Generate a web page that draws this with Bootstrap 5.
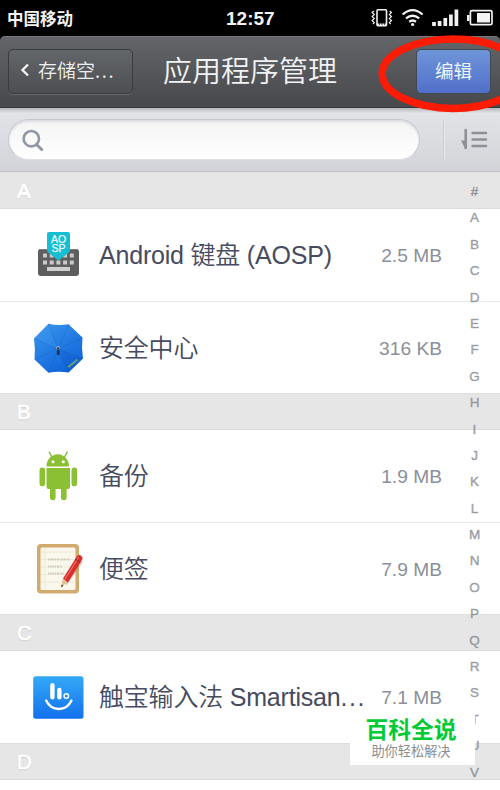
<!DOCTYPE html>
<html lang="zh-CN">
<head>
    <meta charset="UTF-8">
    <meta name="viewport" content="width=device-width, initial-scale=1.0">
    <title>应用程序管理</title>
    <link href="https://cdn.jsdelivr.net/npm/bootstrap@5.3.2/dist/css/bootstrap.min.css" rel="stylesheet">
    <style>
        body { font-family: "Liberation Sans", "Noto Sans CJK SC", sans-serif; height: 790px; overflow: hidden; background: #fff; }
        svg { display: block; flex: none; }

        .status-bar { height: 36px; background: #000; color: #f4f4f4; }
        .carrier { width: 226px; padding-left: 7px; font: 700 16.5px/36px "Noto Sans CJK SC", sans-serif; }
        .clock { font-size: 19px; font-weight: 700; line-height: 38px; }

        .top-wrap { background: #000; }
        .top-bar { height: 72px; background: linear-gradient(#636569, #47484b); border-top: 1px solid #77797c; border-bottom: 1px solid #37383a; border-radius: 5px 5px 0 0; color: #f2f3f4; padding: 0 9px 2px 8px; font-family: "Noto Sans CJK SC", sans-serif; }
        .btn-back { width: 125px; height: 45px; padding: 0 0 2px 11px; border: 1px solid #393b3d; border-radius: 5px; background: linear-gradient(#63666a, #4c4e51); color: #eeeff0; font-size: 19px; font-weight: 350; line-height: 40px; box-shadow: 0 1px 0 #66686b; text-align: left; }
        .page-title { font-size: 29px; font-weight: 350; line-height: 62px; padding-bottom: 4px; margin-left: 30px; width: 176px; white-space: nowrap; }
        .btn-edit { width: 75px; height: 45px; padding: 0 0 2px; border: 1px solid #424754; border-radius: 5px; background: linear-gradient(#6f95d8, #506fca); color: #f1f4fb; font-size: 18.5px; font-weight: 400; line-height: 40px; }

        .search-bar { height: 64px; padding-left: 8px; background: linear-gradient(#b5b6b9, #e2e3e7 5px, #d3d4d9); border-bottom: 1px solid #c3c4c7; }
        .search-field { width: 412px; height: 41px; border-radius: 21px; border: 1px solid #c5c8d1; border-bottom-color: #dfe0e4; background: linear-gradient(#f4f4f4, #fff); box-shadow: inset 0 2px 2px #dcdde1; padding-left: 12px; }
        .split-line { width: 2px; height: 40px; margin-left: 23px; background: #cccdd1; border-right: 1px solid #e8e9eb; }

        .letter-head { height: 37px; padding-left: 17px; background: #e6e6e6; border-top: 1px solid #dedede; border-bottom: 1px solid #dcdcdc; color: #fff; font-size: 20.5px; line-height: 36px; text-shadow: 0 1px 1px #c4c4c4; -webkit-text-stroke: .6px #fff; }
        .app-row { height: 92px; background: #fff; padding: 0 58px 0 32px; }
        .app-row + .app-row { border-top: 1px solid #e9e9e9; }
        .app-name { color: #464b5f; font-size: 25px; font-weight: 350; letter-spacing: -.2px; line-height: 88px; margin-left: 15px; white-space: nowrap; }
        .app-size { color: #8b8f9b; font-size: 19.2px; line-height: 88px; padding-top: 2px; white-space: nowrap; }
        .wide-dots { letter-spacing: 1.6px; }

        .index-strip { position: absolute; top: 179px; left: 460px; width: 29px; color: rgba(115, 120, 130, .62); font-size: 13.5px; text-align: center; -webkit-text-stroke: .5px rgba(115, 120, 130, .62); }
        .index-strip div { height: 26.4px; line-height: 26.4px; }
        .red-ring { position: absolute; top: 0; left: 0; pointer-events: none; }
        .site-mark { position: absolute; top: 712px; left: 350px; width: 125px; height: 53px; background: #fff; font-family: "Noto Sans CJK SC", sans-serif; text-align: center; }
        .site-name { color: #00cb36; font-size: 22.8px; font-weight: 700; line-height: 34px; padding-right: 3px; }
        .site-slogan { color: #8d8d8d; font-size: 13.2px; line-height: 10px; padding-right: 3px; }
    </style>
</head>
<body>
    <div class="status-bar d-flex">
        <div class="carrier">中国移动</div>
        <div class="clock">12:57</div>
        <svg class="ms-auto" width="132" height="36" viewBox="368 0 132 36" fill="none" stroke="#f2f2f2">
            <!-- vibrate -->
            <rect x="377" y="9.8" width="9.5" height="16" rx="1" stroke-width="1.6"/>
            <path d="M377 24.8h9.5" stroke-width="2.5" stroke-dasharray="2 .7"/>
            <path d="M373.8 11l-1.6 1.6 2 2-2 2 2 2-2 2 2 2-1.3 1.6M389.8 11l1.6 1.6-2 2 2 2-2 2 2 2-2 2 1.3 1.6" stroke-width="1.3"/>
            <!-- wifi -->
            <path d="M402.6 14.5q10-8.7 20 0M406 18.4q6.6-5.4 13.2 0M409.2 21.7q3.4-2.5 6.8 0" stroke-width="2.3"/>
            <circle cx="412.6" cy="24.5" r="1.6" fill="#f2f2f2" stroke="none"/>
            <!-- signal -->
            <path d="M434 26v-4M439.6 26v-5M445.3 26v-8M450.9 26V14.5M456.4 26V9.5" stroke-width="3.7"/>
            <!-- battery -->
            <rect x="470.4" y="10.7" width="21.6" height="14" rx="1.5" stroke-width="1.7"/>
            <path d="M477 13h13v9.5h-13zM467 15h2.5v6H467z" fill="#f2f2f2" stroke="none"/>
        </svg>
    </div>

    <div class="top-wrap">
        <div class="top-bar d-flex align-items-center">
            <button type="button" class="btn btn-back d-flex align-items-center">
                <svg width="10" height="14" viewBox="0 0 10 14" fill="none" stroke="#f1f1f1" stroke-width="2.4"><path d="M8 1.5L2.5 7 8 12.5"/></svg>
                <span class="ms-2">存储空<span class="wide-dots">...</span></span>
            </button>
            <h1 class="page-title mb-0">应用程序管理</h1>
            <button type="button" class="btn btn-edit ms-auto">编辑</button>
        </div>
    </div>

    <div class="search-bar d-flex align-items-center">
        <div class="search-field d-flex align-items-center">
            <svg width="24" height="24" viewBox="0 0 24 24" fill="none" stroke="#9196a5" stroke-width="2.6"><circle cx="10.3" cy="10.7" r="7.7"/><path d="M15.5 16.5l5.2 5" stroke-width="3" stroke-linecap="round"/></svg>
        </div>
        <div class="split-line"></div>
        <svg class="ms-3" width="28" height="24" viewBox="461 128 28 24" stroke="#8d9098" stroke-width="2.5" fill="none" stroke-linecap="round"><path d="M472.6 133h13.4M472.6 139.5h13.4M472.6 146h13.4"/><path d="M465.7 130v18" stroke-width="2.6"/><path d="M461 140.5h4v8z" fill="#8d9098" stroke="none"/></svg>
    </div>

    <div class="letter-head">A</div>
    <div class="app-row d-flex align-items-center">
        <svg width="52" height="56" viewBox="32 227 52 56">
            <rect x="38" y="249" width="41" height="27" rx="3" fill="#5e5e5e"/>
            <path d="M39 249.5h39" stroke="#7d7d7d"/>
            <path d="M43 255.5h32M43 262.5h32" stroke="#c9c9c9" stroke-width="4" stroke-dasharray="4 2.7"/>
            <path d="M47 269h23" stroke="#cfcfcf" stroke-width="4"/>
            <path d="M49 232h19q2 0 2 2v16q0 1.5-1.2 2.5L58.5 260.500 48.200 252.500q-1.200-1-1.200-2.500v-16q0-2 2-2z" fill="#17bdd2"/>
            <g font-size="10.5" text-anchor="middle" fill="#e9fbfd" stroke="#e9fbfd" stroke-width=".25">
                <text x="58.5" y="242.8">AO</text>
                <text x="58.5" y="252">SP</text>
            </g>
        </svg>
        <div class="app-name">Android 键盘 (AOSP)</div>
        <div class="app-size ms-auto">2.5 MB</div>
    </div>
    <div class="app-row d-flex align-items-center">
        <svg width="52" height="56" viewBox="32 319 52 56">
            <defs><linearGradient id="umb" x2=".6" y2="1"><stop stop-color="#3a97ed"/><stop offset="1" stop-color="#1165d9"/></linearGradient></defs>
            <path d="M48.5 322.8Q58 325 68.5 323.2L82.5 336.5Q81.3 347 83 357.5L68.5 371.5Q58 370 48.5 371.8L34.5 358.5Q35.5 348 34 337.5z" fill="url(#umb)"/>
            <path d="M58 348L48.5 323M58 348L68.5 323.5M58 348L82 337M58 348L83 357.5M58 348L68.5 371.5M58 348L48.5 371.5M58 348L34.5 358.5M58 348L34 337.5" stroke="#1460c4" stroke-width=".6" opacity=".5"/>
            <path d="M58 348L48.5 323 34 337.5z" fill="#4ba4f4" opacity=".2"/>
            <path d="M58 348L83 357.5 68.5 371.5z" fill="#0a4db8" opacity=".2"/>
            <path d="M58.2 346v8" stroke="#173569" stroke-width="2.6"/>
            <circle cx="58.2" cy="347" r="2" fill="#9bb2ca"/><circle cx="58.2" cy="347.5" r="1.2" fill="#282f3c"/>
            <path d="M68.5 366l9-7.5" stroke="#8cb654" stroke-width="2" stroke-dasharray="1.4 .6"/>
        </svg>
        <div class="app-name">安全中心</div>
        <div class="app-size ms-auto">316 KB</div>
    </div>

    <div class="letter-head">B</div>
    <div class="app-row d-flex align-items-center">
        <svg width="52" height="56" viewBox="32 448 52 56" fill="#8cc034">
            <path d="M46.5 466.5a11 12 0 0 1 22.5 0zM46.5 468H70v19q0 2-2 2H48.5q-2 0-2-2z"/>
            <path d="M52 457l-2.7-4.8M64.5 457l2.7-4.8" stroke="#8cc034" stroke-width="1.5" stroke-linecap="round"/>
            <path d="M42.3 470.2v13.2M74.3 470.2v13.2M52.8 487v10.5M63.8 487v10.5" stroke="#8cc034" stroke-width="5.6" stroke-linecap="round"/>
            <circle cx="53" cy="461.8" r="1.5" fill="#fff"/><circle cx="63.3" cy="461.8" r="1.5" fill="#fff"/>
        </svg>
        <div class="app-name">备份</div>
        <div class="app-size ms-auto">1.9 MB</div>
    </div>
    <div class="app-row d-flex align-items-center">
        <svg width="52" height="56" viewBox="32 541 52 56" fill="none">
            <rect x="37" y="544" width="42" height="49.5" rx="4" fill="#d2aa6e"/>
            <rect x="40.5" y="547.5" width="35" height="42.5" rx="1.5" fill="#faf8ed"/>
            <path d="M41 552h34M41 559.5h34M41 567h34M41 574.5h34M41 582h34M45 548v41.5" stroke="#e9e3d3" stroke-width=".8"/>
            <path d="M48 559.5h22M48 566.5h14M48 573.5h16" stroke="#d3c9bb" stroke-width="2.2" stroke-dasharray="1.4 .8 2.2 .7 .9 .6"/>
            <path d="M65 584l16.5-23" stroke="#857764" stroke-width="4" opacity=".35"/>
            <path d="M61 587.5l2-9 4.5 3.2z" fill="#e6c18c"/>
            <path d="M61 587.5l.7-3 1.7 1.2z" fill="#40352d"/>
            <path d="M63 578.5l14-22.2q1.5-2.3 4.2-.6 2.3 1.8 1 3.9L68 582.5z" fill="#d7302a"/>
            <path d="M65 579l13.5-21.5" stroke="#f0726a" stroke-width="1.2"/>
            <path d="M75.3 559l5 3.3" stroke="#a52825" stroke-width="1.2"/>
        </svg>
        <div class="app-name">便签</div>
        <div class="app-size ms-auto">7.9 MB</div>
    </div>

    <div class="letter-head">C</div>
    <div class="app-row d-flex align-items-center">
        <svg width="52" height="56" viewBox="32 669 52 56" fill="none" stroke="#fff" stroke-linecap="round">
            <defs><linearGradient id="touch" x2="0" y2="1"><stop stop-color="#34a9f7"/><stop offset="1" stop-color="#1270ed"/></linearGradient></defs>
            <rect x="33.2" y="676.2" width="50.3" height="42.6" rx="2.5" fill="url(#touch)" stroke="none"/>
            <path d="M52.4 685.2v12M59.4 690v7.2" stroke-width="4.4"/>
            <circle cx="66.3" cy="696" r="2.3" stroke-width="1.4"/>
            <path d="M46.2 700.5Q50 708.8 58.8 709 67.5 709 71.5 700.5" stroke-width="2.3"/>
        </svg>
        <div class="app-name">触宝输入法 Smartisan<span class="wide-dots">...</span></div>
        <div class="app-size ms-auto">7.1 MB</div>
    </div>
    <div class="letter-head">D</div>

    <div class="index-strip" id="index-strip"></div>

    <div class="site-mark">
        <div class="site-name">百科全说</div>
        <div class="site-slogan">助你轻松解决</div>
    </div>

    <svg class="red-ring" width="500" height="120" fill="none"><ellipse cx="453" cy="73.7" rx="70.8" ry="34.7" stroke="#fc1b05" stroke-width="7.5"/></svg>

    <script>
    // Índice alfabético lateral
    const strip = document.getElementById('index-strip');
    '#ABCDEFGHIJKLMNOPQRSTUV'.split('').forEach(letra => {
        const div = document.createElement('div');
        div.textContent = letra;
        strip.appendChild(div);
    });
    </script>
    <script src="https://cdn.jsdelivr.net/npm/bootstrap@5.3.2/dist/js/bootstrap.bundle.min.js"></script>
</body>
</html>
